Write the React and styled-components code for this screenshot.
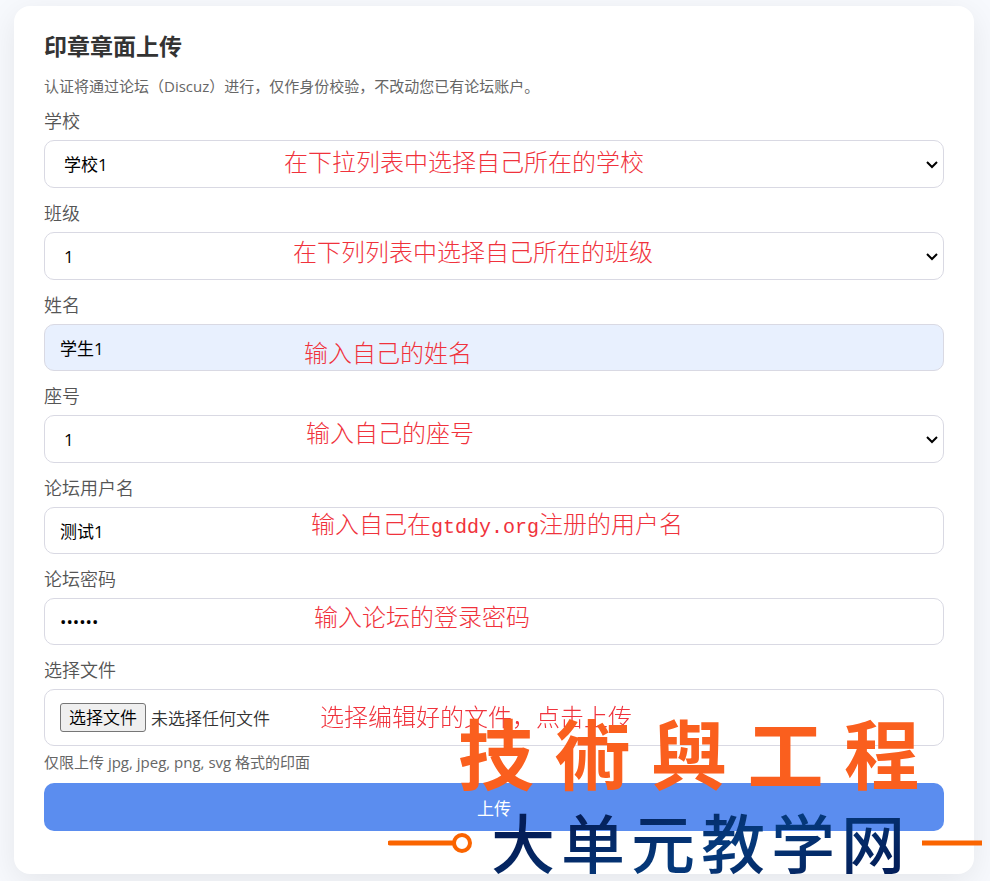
import React, {useState} from 'react';
import styled, {createGlobalStyle, css, ThemeProvider} from 'styled-components';

const theme = {
    colors: {
        page: '#f7f9fd',
        title: '#333',
        label: '#555',
        muted: '#666',
        border: '#d9d9e3',
        primary: '#5b8def',
        autofill: '#e8f0fe',
        note: '#f0323c',
        orange: '#fa5f1e',
        line: '#fa6400',
    },
    fonts: {
        ui: '"Open Sans", "Noto Sans CJK SC", sans-serif',
        note: '"Noto Sans CJK SC", sans-serif',
        mono: '"Liberation Mono", monospace',
        brush: '"Noto Sans CJK TC", sans-serif',
    },
};

const GlobalStyle = createGlobalStyle`
      *, *::before, *::after {
          box-sizing: border-box;
      }

      body {
          margin: 0;
          background: ${theme.colors.page};
          font-family: ${theme.fonts.ui};
          overflow-x: hidden;
      }
`;

const Page = styled.main`
      display: flex;
      justify-content: center;
      padding: 6px 16px 7px 14px;
      overflow: hidden;
`;

const Card = styled.section`
      position: relative;
      width: 100%;
      max-width: 960px;
      padding: 24px 30px 43px;
      border-radius: 16px;
      background: #fff;
      box-shadow: 0 8px 32px rgba(0, 0, 0, 0.08);
`;

const Title = styled.h1`
      margin: 0 0 13px;
      font-size: 23px;
      line-height: 32px;
      font-weight: 700;
      color: ${({theme}) => theme.colors.title};
`;

const SmallText = styled.p`
      margin: 0;
      font-size: 15px;
      line-height: 22px;
      color: ${({theme}) => theme.colors.muted};
`;

const Form = styled.form`
      display: flex;
      flex-direction: column;
      gap: 12px;
      margin-top: 11px;
`;

const Group = styled.div`
      display: flex;
      flex-direction: column;
      gap: 6px;
`;

const Label = styled.label`
      font-size: 18px;
      line-height: 26px;
      font-weight: 350;
      color: ${({theme}) => theme.colors.label};
`;

const ControlArea = styled.div`
      position: relative;
      display: flex;
`;

const controlStyle = css`
      width: 100%;
      border: 1px solid ${({theme}) => theme.colors.border};
      border-radius: 10px;
      background: #fff;
      color: #000;
      font-family: inherit;
      font-size: 17px;
      outline: none;
`;

const Select = styled.select`
      ${controlStyle}
      height: 48px;
      padding: 0 30px 0 19px;
      appearance: none;
`;

const Chevron = styled.svg`
      position: absolute;
      right: 5px;
      top: 20px;
      pointer-events: none;
`;

const Input = styled.input`
      ${controlStyle}
      height: 47px;
      padding: 0 15px;
      background: ${({$filled, theme}) => $filled ? theme.colors.autofill : '#fff'};
`;

const FileBox = styled.div`
      ${controlStyle}
      display: flex;
      align-items: center;
      gap: 5px;
      height: 57px;
      padding: 0 15px;
      color: #333;
      font-weight: 350;
`;

const HiddenFile = styled.input`
      position: absolute;
      inset: 0;
      width: 100%;
      opacity: 0;
      cursor: pointer;
`;

const FileButton = styled.span`
      padding: 0 8px;
      border: 1px solid #767676;
      border-radius: 3px;
      background: #efefef;
      color: #000;
      line-height: 27px;
`;

const Note = styled.span`
      position: absolute;
      left: ${({$x}) => $x}px;
      top: ${({$y}) => $y}px;
      font-family: ${({theme}) => theme.fonts.note};
      font-size: 24px;
      line-height: 30px;
      font-weight: 300;
      color: ${({theme}) => theme.colors.note};
      white-space: nowrap;
      pointer-events: none;
`;

const Latin = styled.span`
      font-family: ${({theme}) => theme.fonts.mono};
      font-size: 20px;
      font-weight: 400;
`;

const FileGroup = styled.div`
      display: flex;
      flex-direction: column;
      gap: 5px;
`;

const Footer = styled.div`
      display: flex;
      flex-direction: column;
      gap: 10px;
`;

const SubmitButton = styled.button`
      width: 100%;
      height: 48px;
      border: 0;
      border-radius: 10px;
      background: ${({theme}) => theme.colors.primary};
      color: #fff;
      font-family: inherit;
      font-size: 17px;
      cursor: pointer;
`;

const Watermark = styled.div`
      position: absolute;
      right: -8px;
      bottom: -7px;
      width: 594px;
      pointer-events: none;
`;

const BrushRow = styled.div`
      display: flex;
      justify-content: space-between;
      padding: 0 62px 0 70px;
      font-family: ${({theme}) => theme.fonts.brush};
      font-size: 76px;
      line-height: 80px;
      font-weight: 700;
      color: ${({theme}) => theme.colors.orange};
`;

const SiteRow = styled.div`
      display: flex;
      align-items: center;
      justify-content: space-between;
      margin-top: 14px;
`;

const SiteName = styled.div`
      display: flex;
      gap: 6px;
      padding-bottom: 6px;
      font-family: ${({theme}) => theme.fonts.note};
      font-size: 64px;
      line-height: 70px;
      font-weight: 500;
      color: transparent;
      background: linear-gradient(160deg, #041e58 20%, #053a7c 55%, #031f5a 90%);
      background-clip: text;
`;

const fields = [
    {id: 'school', label: '学校', type: 'select', value: '学校1', note: '在下拉列表中选择自己所在的学校', x: 240, y: 6},
    {id: 'class', label: '班级', type: 'select', value: '1', note: '在下列列表中选择自己所在的班级', x: 249, y: 4},
    {id: 'name', label: '姓名', type: 'text', value: '学生1', filled: true, note: '输入自己的姓名', x: 260, y: 13},
    {id: 'seat', label: '座号', type: 'select', value: '1', note: '输入自己的座号', x: 262, y: 2},
    {
        id: 'username', label: '论坛用户名', type: 'text', value: '测试1',
        note: <>输入自己在<Latin>gtddy.org</Latin>注册的用户名</>, x: 267, y: 1
    },
    {id: 'password', label: '论坛密码', type: 'password', value: '123456', note: '输入论坛的登录密码', x: 270, y: 3},
];

const Field = ({field}) => (
    <Group>
        <Label htmlFor={field.id}>{field.label}</Label>
        <ControlArea>
            {field.type === 'select' ?
                <>
                    <Select id={field.id} defaultValue={field.value}>
                        <option value={field.value}>{field.value}</option>
                    </Select>
                    <Chevron width="14" height="10" viewBox="0 0 14 10" fill="none" stroke="#000" aria-hidden="true">
                        <path d="M2 2L7 7L12 2" strokeWidth="2"/>
                    </Chevron>
                </>
                :
                <Input id={field.id} type={field.type} defaultValue={field.value} $filled={field.filled}/>
            }
            <Note $x={field.x} $y={field.y}>{field.note}</Note>
        </ControlArea>
    </Group>
);

const SiteWatermark = () => (
    <Watermark>
        <BrushRow>
            {[...'技術與工程'].map(char => <span key={char}>{char}</span>)}
        </BrushRow>
        <SiteRow>
            <svg width="86" height="22" viewBox="0 0 86 22" fill="none" stroke={theme.colors.line} aria-hidden="true">
                <path d="M2 11H65" strokeWidth="5" strokeLinecap="round"/>
                <circle cx="74" cy="11" r="8" strokeWidth="4"/>
            </svg>
            <SiteName>
                {[...'大单元教学网'].map(char => <span key={char}>{char}</span>)}
            </SiteName>
            <svg width="60" height="22" viewBox="0 0 60 22" stroke={theme.colors.line} aria-hidden="true">
                <path d="M0 11H60" strokeWidth="5"/>
            </svg>
        </SiteRow>
    </Watermark>
);

const App = () => {

    const [fileName, setFileName] = useState('');

    return (
        <ThemeProvider theme={theme}>
            <GlobalStyle/>
            <Page>
                <Card>
                    <Title>印章章面上传</Title>
                    <SmallText>认证将通过论坛（Discuz）进行，仅作身份校验，不改动您已有论坛账户。</SmallText>
                    <Form onSubmit={event => event.preventDefault()}>
                        {fields.map(field => <Field key={field.id} field={field}/>)}
                        <Footer>
                            <FileGroup>
                                <Group>
                                    <Label htmlFor="file">选择文件</Label>
                                    <ControlArea>
                                        <FileBox>
                                            <FileButton>选择文件</FileButton>
                                            <span>{fileName || '未选择任何文件'}</span>
                                        </FileBox>
                                        <HiddenFile
                                            id="file"
                                            type="file"
                                            accept=".jpg,.jpeg,.png,.svg"
                                            onChange={event => setFileName(event.target.files[0]?.name || '')}
                                        />
                                        <Note $x={276} $y={12}>选择编辑好的文件，点击上传</Note>
                                    </ControlArea>
                                </Group>
                                <SmallText>仅限上传 jpg, jpeg, png, svg 格式的印面</SmallText>
                            </FileGroup>
                            <SubmitButton type="submit">上传</SubmitButton>
                        </Footer>
                    </Form>
                    <SiteWatermark/>
                </Card>
            </Page>
        </ThemeProvider>
    )
};

export default App;
